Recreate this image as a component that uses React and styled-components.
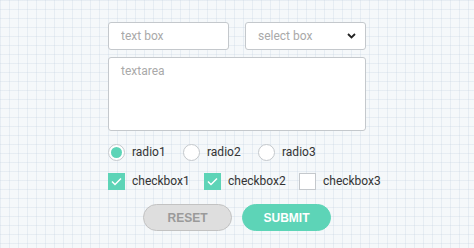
import React, { useState } from "react";
import styled, { createGlobalStyle } from "styled-components";

const GlobalStyle = createGlobalStyle`
  html, body {
    margin: 0;
    padding: 0;
  }
  body {
    font-family: Roboto, "Noto Sans CJK JP", sans-serif;
    background-color: #f5f8fa;
    background-image:
      linear-gradient(to right, rgba(200, 214, 226, 0.32) 1px, transparent 1px),
      linear-gradient(to bottom, rgba(200, 214, 226, 0.32) 1px, transparent 1px);
    background-size: 9px 9px;
  }
`;

const TEAL = "#5dd4b7";

const Page = styled.div`
  width: 474px;
  height: 248px;
  box-sizing: border-box;
  padding-top: 22px;
  display: flex;
  justify-content: center;
`;

const Form = styled.form`
  width: 258px;
  display: flex;
  flex-direction: column;
`;

const Row = styled.div`
  display: flex;
  gap: 16px;
`;

const Field = styled.input`
  width: 121px;
  height: 28px;
  box-sizing: border-box;
  border: 1px solid #c4c8cc;
  border-radius: 3px;
  background: #fff;
  padding: 0 12px;
  font-family: inherit;
  font-size: 12px;
  color: #333;
  outline: none;
  &::placeholder {
    color: #a9a9a9;
  }
`;

const SelectBox = styled.div`
  width: 121px;
  height: 28px;
  box-sizing: border-box;
  border: 1px solid #c4c8cc;
  border-radius: 3px;
  background: #fff;
  padding: 0 9px 0 12px;
  display: flex;
  align-items: center;
  justify-content: space-between;
  font-size: 12px;
  color: #a9a9a9;
`;

const Area = styled.textarea`
  margin-top: 7px;
  width: 258px;
  height: 74px;
  box-sizing: border-box;
  border: 1px solid #c4c8cc;
  border-radius: 3px;
  background: #fff;
  padding: 6px 12px;
  font-family: inherit;
  font-size: 12px;
  resize: none;
  outline: none;
  &::placeholder {
    color: #a9a9a9;
  }
`;

const ChoiceRow = styled.div`
  display: flex;
  align-items: center;
  margin-top: ${(p) => p.$top}px;
  height: 18px;
`;

const Choice = styled.label`
  display: flex;
  align-items: center;
  gap: 7px;
  flex-shrink: 0;
  width: ${(p) => p.$w}px;
  font-size: 12px;
  color: #333;
  white-space: nowrap;
  cursor: pointer;
`;

const RadioDot = styled.span`
  flex-shrink: 0;
  width: 17px;
  height: 17px;
  box-sizing: border-box;
  border-radius: 50%;
  border: 1px solid #c4c8cc;
  background: #fff;
  display: flex;
  align-items: center;
  justify-content: center;
  &::after {
    content: "";
    width: 11px;
    height: 11px;
    border-radius: 50%;
    background: ${(p) => (p.$on ? TEAL : "transparent")};
  }
`;

const Box = styled.span`
  flex-shrink: 0;
  width: 17px;
  height: 17px;
  box-sizing: border-box;
  border: 1px solid ${(p) => (p.$on ? TEAL : "#c4c8cc")};
  background: ${(p) => (p.$on ? TEAL : "#fff")};
  display: flex;
  align-items: center;
  justify-content: center;
`;

const Buttons = styled.div`
  margin-top: 14px;
  display: flex;
  justify-content: center;
  gap: 10px;
`;

const Btn = styled.button`
  width: 89px;
  height: 27px;
  border-radius: 14px;
  border: 1px solid ${(p) => (p.$primary ? TEAL : "#c2c2c2")};
  background: ${(p) => (p.$primary ? TEAL : "#dedede")};
  color: ${(p) => (p.$primary ? "#fff" : "#9a9a9a")};
  font-family: "Liberation Sans", Arial, sans-serif;
  font-weight: bold;
  font-size: 12px;
  cursor: pointer;
`;

const radios = ["radio1", "radio2", "radio3"];
const checks = [
  { label: "checkbox1", w: 96 },
  { label: "checkbox2", w: 95 },
  { label: "checkbox3", w: 80 },
];

export default function App() {
  const [radio, setRadio] = useState("radio1");
  const [checked, setChecked] = useState({ checkbox1: true, checkbox2: true });

  return (
    <>
      <GlobalStyle />
      <Page>
        <Form onSubmit={(e) => e.preventDefault()}>
          <Row>
            <Field placeholder="text box" />
            <SelectBox>
              <span>select box</span>
              <svg width="9" height="6" viewBox="0 0 9 6">
                <path d="M1 1l3.5 3.5L8 1" fill="none" stroke="#222" strokeWidth="1.8" />
              </svg>
            </SelectBox>
          </Row>
          <Area placeholder="textarea" />
          <ChoiceRow $top={12}>
            {radios.map((r) => (
              <Choice key={r} $w={75} onClick={() => setRadio(r)}>
                <RadioDot $on={radio === r} />
                {r}
              </Choice>
            ))}
          </ChoiceRow>
          <ChoiceRow $top={11}>
            {checks.map((c) => (
              <Choice
                key={c.label}
                $w={c.w}
                onClick={() => setChecked({ ...checked, [c.label]: !checked[c.label] })}
              >
                <Box $on={checked[c.label]}>
                  {checked[c.label] && (
                    <svg width="11" height="9" viewBox="0 0 11 9">
                      <path d="M1 4.5l3 3L10 1.5" fill="none" stroke="#fff" strokeWidth="1.5" />
                    </svg>
                  )}
                </Box>
                {c.label}
              </Choice>
            ))}
          </ChoiceRow>
          <Buttons>
            <Btn type="reset">RESET</Btn>
            <Btn $primary type="submit">SUBMIT</Btn>
          </Buttons>
        </Form>
      </Page>
    </>
  );
}
